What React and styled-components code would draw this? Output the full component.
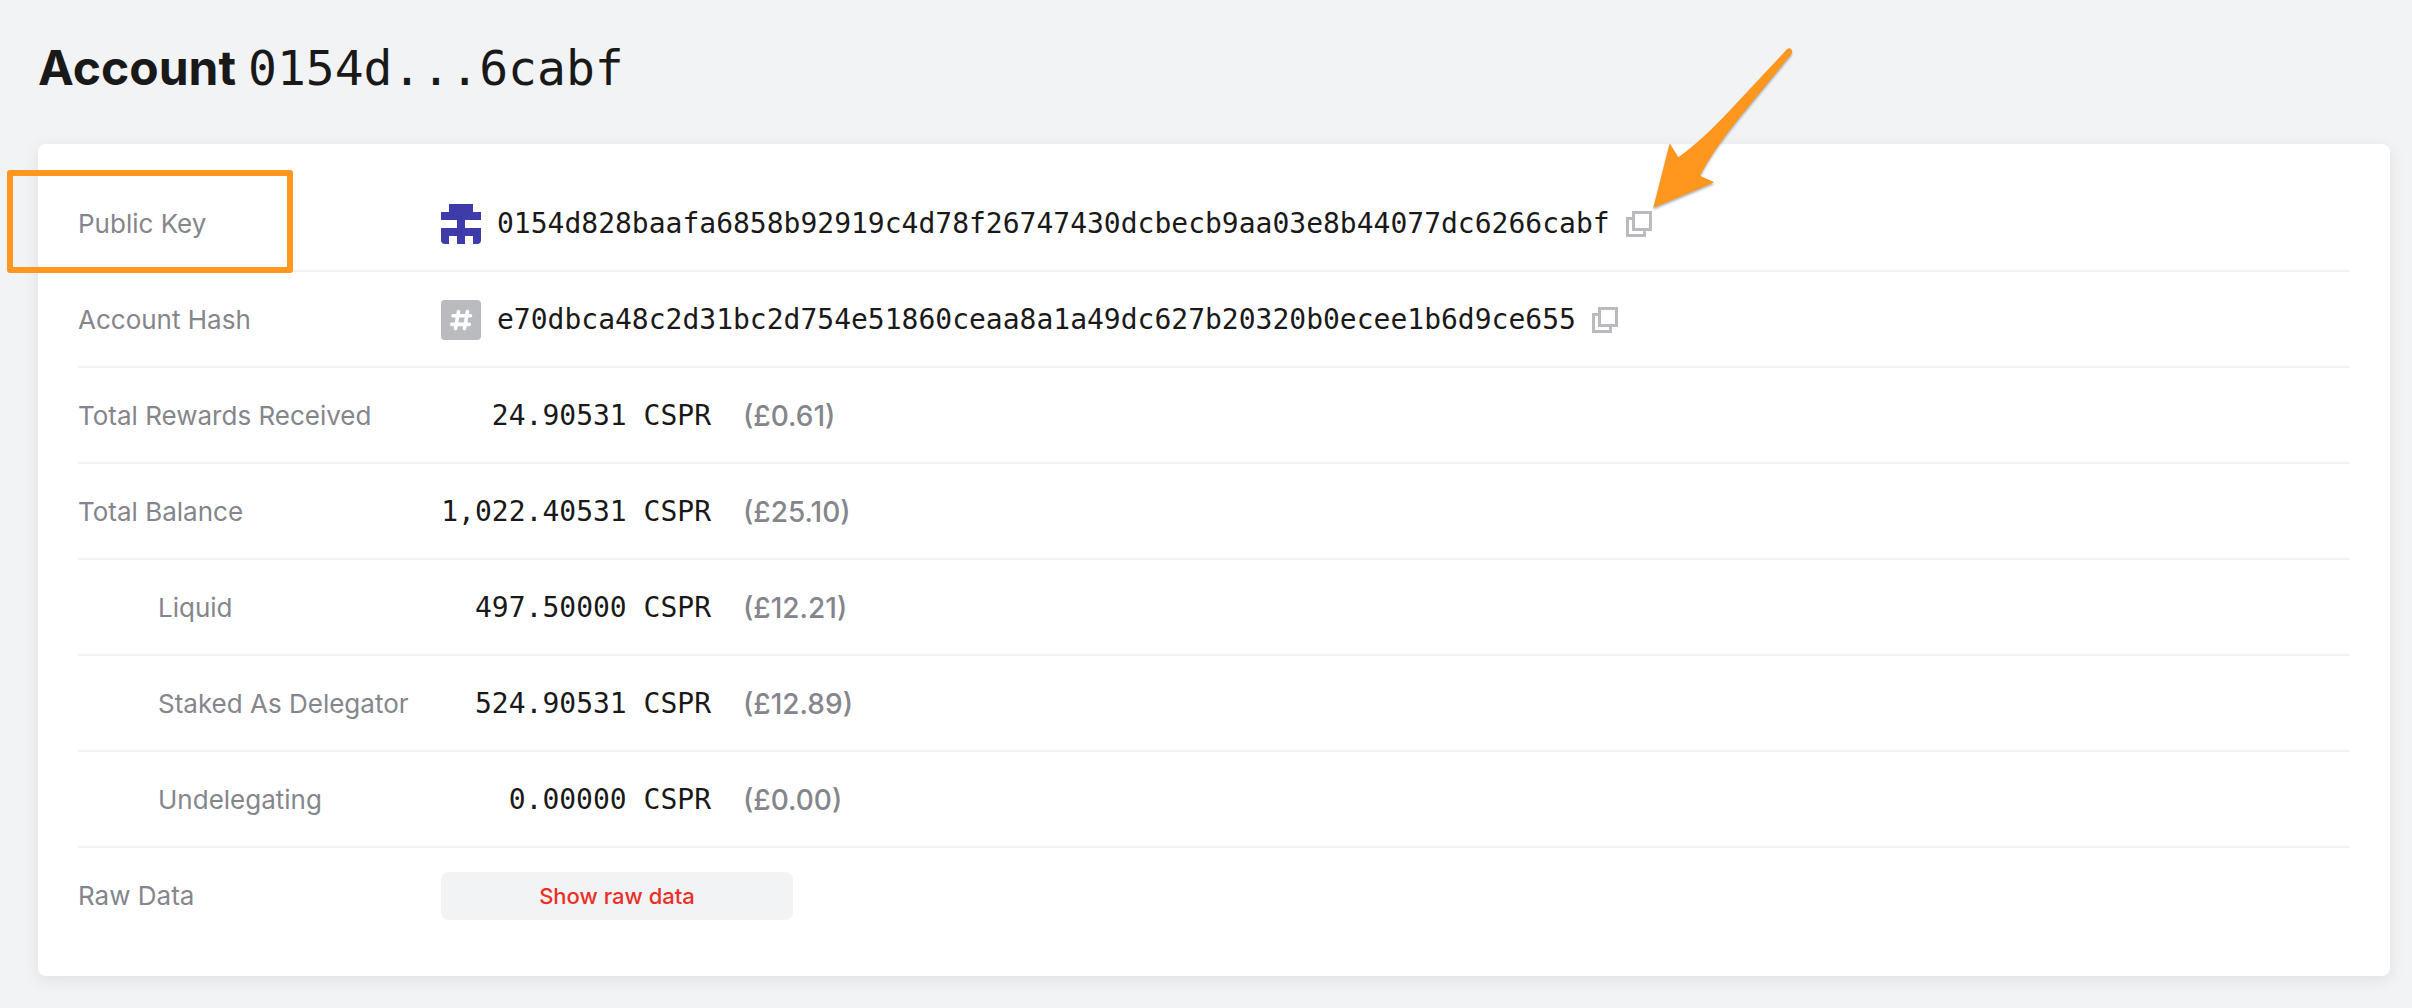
import React from 'react';
import styled, { createGlobalStyle } from 'styled-components';

const MONO = '"DejaVu Sans Mono", "Liberation Mono", monospace';

const GlobalStyle = createGlobalStyle`
  *, *::before, *::after { box-sizing: border-box; }
  body {
    margin: 0;
    background: #f1f3f5;
    color: #1a1919;
    font-family: Inter, "Liberation Sans", sans-serif;
  }
`;

const Page = styled.main`
  padding: 36px 22px 32px 38px;
`;

const Title = styled.h1`
  display: flex;
  align-items: baseline;
  gap: 12px;
  margin: 0 0 44px;
  font-size: 48px;
  line-height: 64px;
  font-weight: 700;
`;

const TitleHash = styled.span`
  font-family: ${MONO};
  font-weight: 400;
`;

const Card = styled.dl`
  margin: 0;
  padding: 32px 40px;
  background: #fff;
  border-radius: 8px;
  box-shadow: 0 4px 14px rgba(132, 134, 140, 0.16);
`;

const Row = styled.div`
  display: flex;
  align-items: center;
  height: 96px;
  box-shadow: inset 0 -2px #f2f2f4;

  &:last-child { box-shadow: none; }
`;

const Label = styled.dt`
  position: relative;
  display: flex;
  align-items: center;
  flex: 0 0 363px;
  align-self: stretch;
  padding-left: ${({ $nested }) => ($nested ? '80px' : '0')};
  font-size: 26px;
  line-height: 32px;
  color: #84868c;
  white-space: nowrap;
`;

const Value = styled.dd`
  display: flex;
  align-items: center;
  margin: 0;
  font-family: ${MONO};
  font-size: 28px;
  line-height: 40px;
  white-space: nowrap;
`;

const Badge = styled.svg`
  flex: none;
  width: 40px;
  height: 40px;
  margin-right: 16px;
  border-radius: 4px;
`;

const CopyButton = styled.button`
  position: relative;
  display: flex;
  margin: 0 0 0 16px;
  padding: 0;
  border: 0;
  background: none;
  color: #babbbf;
  cursor: pointer;
`;

const Amount = styled.span`
  min-width: 270px;
  text-align: right;
`;

const Fiat = styled.span`
  margin-left: 32px;
  font-family: Inter, "Liberation Sans", sans-serif;
  font-weight: 500;
  color: #84868c;
`;

const RawButton = styled.button`
  width: 352px;
  height: 48px;
  padding: 0;
  border: 0;
  border-radius: 8px;
  background: #f2f3f5;
  color: #ea2f26;
  font: 500 22px/32px Inter, "Liberation Sans", sans-serif;
  cursor: pointer;
`;

const Highlight = styled.span`
  position: absolute;
  top: -6px;
  left: -71px;
  width: 286px;
  height: 103px;
  border: 6px solid #ff961e;
  border-radius: 3px;
  pointer-events: none;
`;

const Pointer = styled.svg`
  position: absolute;
  left: 14px;
  bottom: 17px;
  width: 160px;
  height: 180px;
  pointer-events: none;
  filter: drop-shadow(0 2px 1px rgba(0, 0, 0, 0.3));
`;

const Identicon = () => (
  <Badge viewBox="0 0 5 5" shapeRendering="crispEdges" aria-hidden="true">
    <path fill="#3f3ba9" d="M1 0h3v1h1v1H3v1h2v2H4V4H3v1H2V4H1v1H0V3h2V2H0V1h1z" />
  </Badge>
);

const HashIcon = () => (
  <Badge viewBox="0 0 40 40" aria-hidden="true">
    <rect width="40" height="40" fill="#babbbf" />
    <path
      d="M17.5 11.5L14.5 28.5M26.5 11.5L23.5 28.5M12 15.8H29.5M10.8 24.4H28.3"
      fill="none"
      stroke="#fff"
      strokeWidth="3.6"
      strokeLinecap="round"
    />
  </Badge>
);

const Copy = ({ label, children }) => (
  <CopyButton type="button" aria-label={label}>
    <svg width="26" height="26" viewBox="0 0 26 26" fill="none" stroke="currentColor" strokeWidth="3" aria-hidden="true">
      <path d="M7.5 1.5h17v17h-17z" />
      <path d="M7.5 7.5h-6v17h17v-6" />
    </svg>
    {children}
  </CopyButton>
);

const Arrow = () => (
  <Pointer viewBox="0 0 480 540" aria-hidden="true">
    <path
      fill="#ff961e"
      d="M40 503L89 310L115 352Q185 302 270 211L441 28Q448 22 454 28Q458 34 454 42L315 212Q220 327 180 407L223 427Z"
    />
  </Pointer>
);

const balances = [
  { label: 'Total Rewards Received', amount: '24.90531', fiat: '£0.61' },
  { label: 'Total Balance', amount: '1,022.40531', fiat: '£25.10' },
  { label: 'Liquid', amount: '497.50000', fiat: '£12.21', nested: true },
  { label: 'Staked As Delegator', amount: '524.90531', fiat: '£12.89', nested: true },
  { label: 'Undelegating', amount: '0.00000', fiat: '£0.00', nested: true },
];

export default function App() {
  return (
    <>
      <GlobalStyle />
      <Page>
        <Title>
          Account <TitleHash>0154d...6cabf</TitleHash>
        </Title>
        <Card>
          <Row>
            <Label>
              Public Key
              <Highlight />
            </Label>
            <Value>
              <Identicon />
              0154d828baafa6858b92919c4d78f26747430dcbecb9aa03e8b44077dc6266cabf
              <Copy label="Copy public key">
                <Arrow />
              </Copy>
            </Value>
          </Row>
          <Row>
            <Label>Account Hash</Label>
            <Value>
              <HashIcon />
              e70dbca48c2d31bc2d754e51860ceaa8a1a49dc627b20320b0ecee1b6d9ce655
              <Copy label="Copy account hash" />
            </Value>
          </Row>
          {balances.map(({ label, amount, fiat, nested }) => (
            <Row key={label}>
              <Label $nested={nested}>{label}</Label>
              <Value>
                <Amount>{amount} CSPR</Amount>
                <Fiat>({fiat})</Fiat>
              </Value>
            </Row>
          ))}
          <Row>
            <Label>Raw Data</Label>
            <Value>
              <RawButton type="button">Show raw data</RawButton>
            </Value>
          </Row>
        </Card>
      </Page>
    </>
  );
}
